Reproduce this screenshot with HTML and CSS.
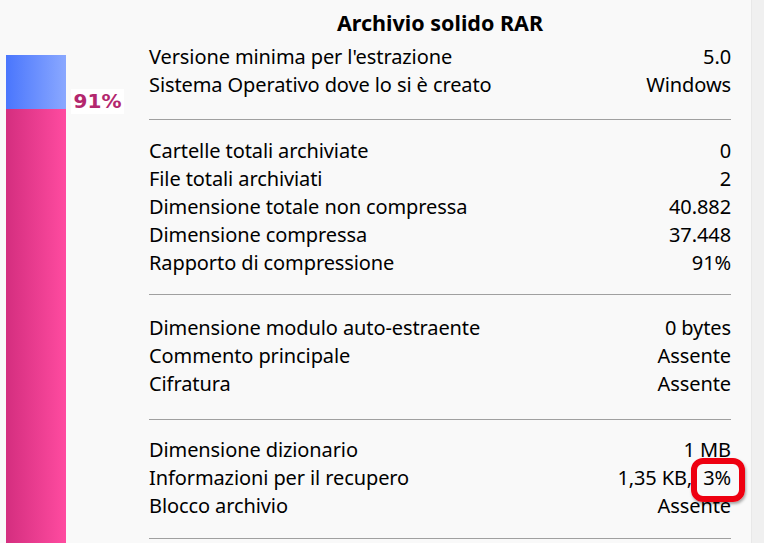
FILE: index.html
```html
<!DOCTYPE html>
<html lang="it">
<head>
<meta charset="utf-8">
<title>Archivio solido RAR</title>
<link rel="stylesheet" href="styles.css">
</head>
<body>
<div class="gauge">
  <div class="gauge-free"></div>
  <div class="gauge-used"></div>
</div>
<div class="gauge-label">91%</div>
<main class="info">
  <h1 class="title">Archivio solido RAR</h1>
  <section class="group g1">
    <div class="row"><span>Versione minima per l'estrazione</span><span>5.0</span></div>
    <div class="row"><span>Sistema Operativo dove lo si è creato</span><span>Windows</span></div>
  </section>
  <section class="group g2">
    <div class="row"><span>Cartelle totali archiviate</span><span>0</span></div>
    <div class="row"><span>File totali archiviati</span><span>2</span></div>
    <div class="row"><span>Dimensione totale non compressa</span><span>40.882</span></div>
    <div class="row"><span>Dimensione compressa</span><span>37.448</span></div>
    <div class="row"><span>Rapporto di compressione</span><span>91%</span></div>
  </section>
  <section class="group g3">
    <div class="row"><span>Dimensione modulo auto-estraente</span><span>0 bytes</span></div>
    <div class="row"><span>Commento principale</span><span>Assente</span></div>
    <div class="row"><span>Cifratura</span><span>Assente</span></div>
  </section>
  <section class="group g4">
    <div class="row"><span>Dimensione dizionario</span><span>1 MB</span></div>
    <div class="row"><span>Informazioni per il recupero</span><span>1,35 KB, <span class="highlight">3%</span></span></div>
    <div class="row"><span>Blocco archivio</span><span>Assente</span></div>
  </section>
</main>
<div class="scroll-strip"></div>
</body>
</html>
```
FILE: styles.css
```css
html, body {
  margin: 0;
  height: 543px;
  overflow: hidden;
}
body {
  display: flex;
  align-items: flex-start;
  background: #f9f9f9;
  font-family: "Noto Sans", "Open Sans", sans-serif;
  color: #000;
}
.gauge {
  margin-left: 6px;
  padding-top: 55px;
  width: 60px;
  height: 488px;
  display: flex;
  flex-direction: column;
}
.gauge-free {
  height: 54px;
  background: linear-gradient(to right, #4a76fd, #8aa8ff);
}
.gauge-used {
  flex: 1;
  background: linear-gradient(to right, #d42e7f, #ff4ba0);
}
.gauge-label {
  margin-left: 5px;
  margin-top: 89px;
  width: 53px;
  height: 25px;
  line-height: 25px;
  background: #fff;
  text-align: center;
  font-family: "DejaVu Sans", Verdana, sans-serif;
  font-weight: bold;
  font-size: 20px;
  color: #b3276e;
}
.info {
  margin-left: 25px;
  width: 582px;
  font-size: 20px;
  letter-spacing: -0.1px;
}
.title {
  margin: 9px 0 6px;
  font-size: 21.5px;
  line-height: 28px;
  font-weight: bold;
  letter-spacing: 0;
  text-align: center;
}
.group {
  border-bottom: 1px solid #a0a0a0;
}
.g1 { padding: 0 0 20px; }
.g2 { padding: 17px 0 17px; }
.g3 { padding: 19px 0 21px; }
.g4 { padding: 16px 0 18px; }
.row {
  display: flex;
  justify-content: space-between;
  line-height: 28px;
  white-space: nowrap;
}
.highlight {
  position: relative;
  margin-left: 6px;
}
.highlight::after {
  content: "";
  position: absolute;
  left: -12px;
  right: -14px;
  top: -6px;
  bottom: -11px;
  border: 6px solid #ee0010;
  border-radius: 12px;
  box-shadow: 1px 2px 3px rgba(0,0,0,0.35);
}
.scroll-strip {
  margin-left: 20px;
  width: 12px;
  height: 543px;
  background: #f0f0f0;
  border-left: 1px solid #e8e8e8;
}
```
